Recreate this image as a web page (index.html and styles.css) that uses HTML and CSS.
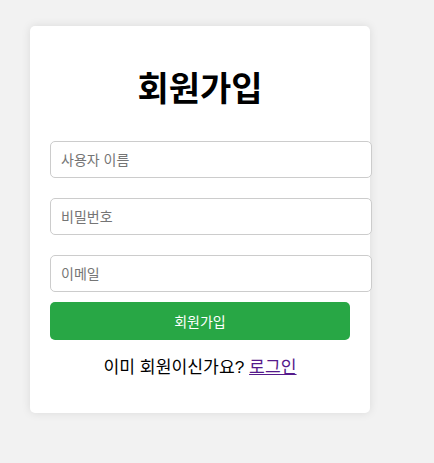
FILE: index.html
```
<!DOCTYPE html>
<html lang="ko">
<head>
<meta charset="utf-8">
<title>회원가입</title>
<link rel="stylesheet" href="styles.css">
</head>
<body>
<div class="card">
  <h1 class="title">회원가입</h1>
  <form class="form">
    <input class="field" type="text" placeholder="사용자 이름">
    <input class="field" type="password" placeholder="비밀번호">
    <input class="field" type="email" placeholder="이메일">
    <button class="submit" type="button">회원가입</button>
  </form>
  <p class="note">이미 회원이신가요? <a class="link" href="#">로그인</a></p>
</div>
</body>
</html>
```
FILE: styles.css
```
html, body {
  margin: 0;
  padding: 0;
}
body {
  background: #f2f2f2;
  font-family: "Liberation Sans", "Noto Sans CJK KR", sans-serif;
  width: 434px;
  height: 463px;
  padding: 26px 0 0 30px;
  box-sizing: border-box;
}
.card {
  width: 340px;
  box-sizing: border-box;
  background: #fff;
  border-radius: 5px;
  box-shadow: 0 0 10px rgba(0, 0, 0, 0.1);
  padding: 20px;
  display: flex;
  flex-direction: column;
  align-items: flex-start;
}
.title {
  align-self: stretch;
  text-align: center;
  font-size: 34px;
  line-height: 40px;
  font-weight: bold;
  margin: 23px 0 0;
  color: #000;
}
.form {
  display: flex;
  flex-direction: column;
  align-items: flex-start;
  margin: 32px 0 0;
  width: 300px;
}
.field {
  width: 300px;
  height: 15px;
  padding: 10px;
  border: 1px solid #ccc;
  border-radius: 5px;
  font-family: "Liberation Sans", "Noto Sans CJK KR", sans-serif;
  font-size: 14px;
  margin: 0 0 20px;
  background: #fff;
  color: #333;
}
.field:nth-of-type(3) {
  margin-bottom: 10px;
}
.field::placeholder {
  color: #757575;
}
.submit {
  width: 300px;
  height: 38px;
  border: none;
  border-radius: 5px;
  background: #28a745;
  color: #fff;
  font-family: "Liberation Sans", "Noto Sans CJK KR", sans-serif;
  font-size: 14px;
  padding: 0;
}
.note {
  align-self: stretch;
  text-align: center;
  font-size: 17.2px;
  line-height: 23px;
  margin: 16px 0 14px;
  color: #000;
}
.link {
  color: #551a8b;
  text-decoration: underline;
}
```
